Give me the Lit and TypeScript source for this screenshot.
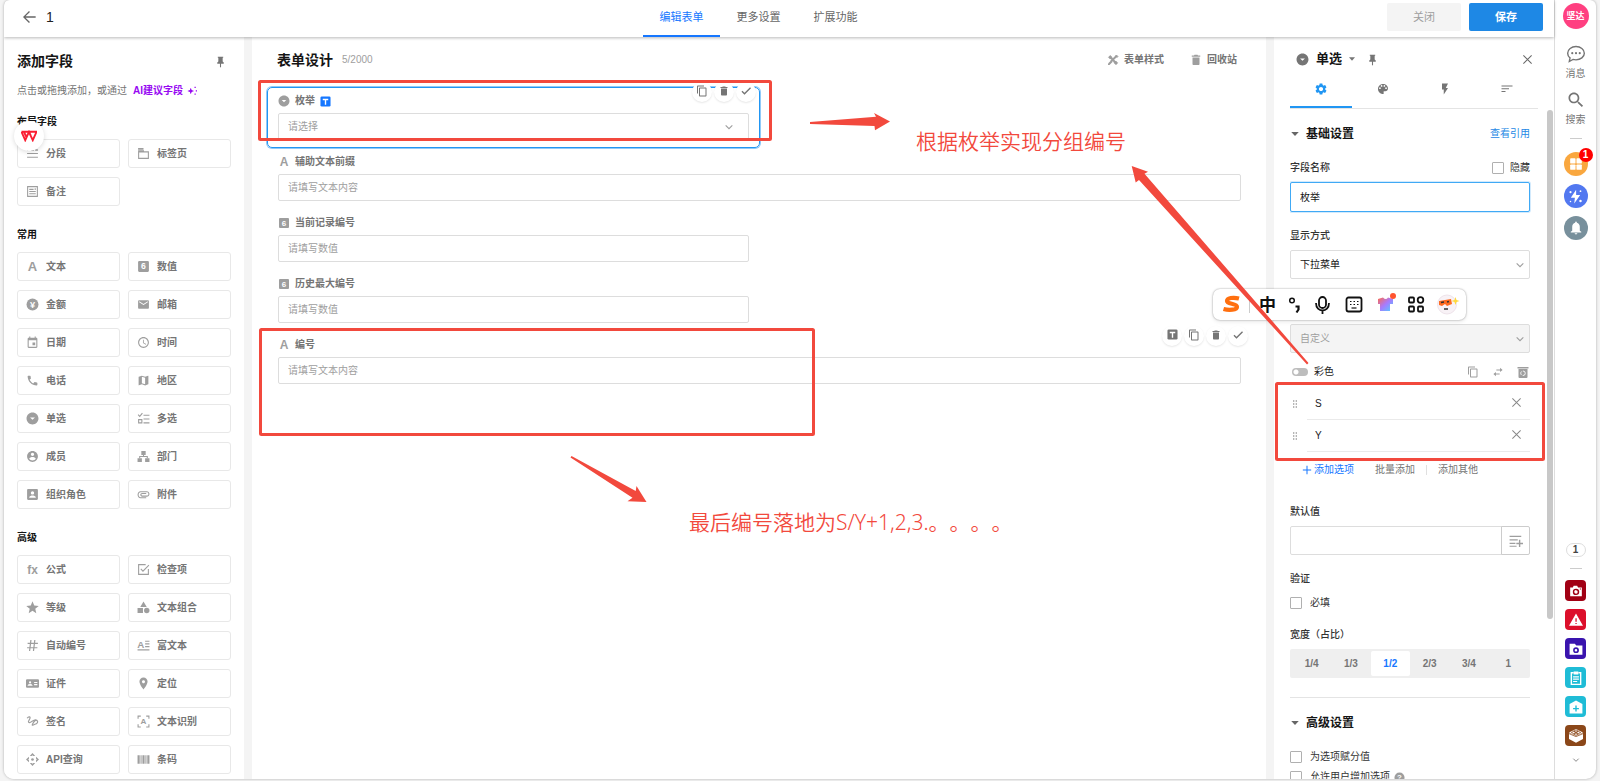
import { LitElement, html, svg, css, nothing, TemplateResult } from "lit";
import { customElement, state } from "lit/decorators.js";
import { classMap } from "lit/directives/class-map.js";

const path = (d: string) => svg`<path d=${d} />`;

const DROP_CIRCLE = path("M12 1C5.900 1 1 5.900 1 12s4.900 11 11 11 11-4.900 11-11S18.100 1 12 1zm0 13.500l-4.500-4.500h9l-4.500 4.500z");
const TRASH = path("M6 19c0 1.1.9 2 2 2h8c1.1 0 2-.9 2-2V7H6v12zM19 4h-3.5l-1-1h-5l-1 1H5v2h14V4z");

const GLYPHS: Record<string, unknown> = {
  back: path("M22 11H6.83l6.59-6.59L12 3l-9 9 9 9 1.41-1.41L6.83 13H22v-2z"),
  pin: path("M16 5h.99L17 3H7v2h1v7l-2 2v2h5v6l1 1 1-1v-6h5v-2l-2-2V5z"),
  sparkle: path("M9 4l2.2 5.8L17 12l-5.800 2.200L9 20l-2.200-5.800L1 12l5.800-2.200zM18 2h3v3h-3zM21 10h3v3h-3zM18 18h3v3h-3z"),
  divider: path("M2 4h5v3H2zM9.500 4h5v3h-5zM17 4h5v3h-5zM2 11h20v2H2zM2 18h20v2H2z"),
  tabpage: svg`<path d="M2 2h10v3H2z"/><path d="M3 9h18v12H3zM3 9V7h9v2" fill="none" stroke="currentColor" stroke-width="2"/>`,
  note: svg`<path d="M3 3h18v18H3z" fill="none" stroke="currentColor" stroke-width="2"/><path d="M6 7h8v2H6zM6 11h12v2H6zM6 15h12v2H6zM16 6h2v3h-2z"/>`,
  text: svg`<text x="12" y="20" text-anchor="middle" font-size="24" font-weight="700">A</text>`,
  number: svg`<rect x="2" y="2" width="20" height="20" rx="2"/><text x="12" y="17.500" text-anchor="middle" font-size="16" font-weight="700" fill="#fff">6</text>`,
  money: svg`<circle cx="12" cy="12" r="11"/><text x="12" y="18" text-anchor="middle" font-size="17" font-weight="700" fill="#fff">¥</text>`,
  mail: path("M20 4H4c-1.100 0-1.990.9-1.990 2L2 18c0 1.100.9 2 2 2h16c1.100 0 2-.9 2-2V6c0-1.100-.9-2-2-2zm0 4l-8 5-8-5V6l8 5 8-5v2z"),
  date: path("M17 12h-5v5h5v-5zM16 1v2H8V1H6v2H5c-1.110 0-1.990.9-1.990 2L3 20c0 1.100.89 2 2 2h14c1.100 0 2-.9 2-2V5c0-1.100-.9-2-2-2h-1V1h-2zm3 19H5V8h14v12z"),
  time: path("M11.990 2C6.470 2 2 6.480 2 12s4.470 10 9.990 10C17.520 22 22 17.520 22 12S17.520 2 11.990 2zM12 20c-4.420 0-8-3.580-8-8s3.580-8 8-8 8 3.580 8 8-3.580 8-8 8zm.5-13H11v6l5.250 3.150.75-1.230-4.500-2.670z"),
  phone: path("M6.620 10.790c1.440 2.830 3.760 5.140 6.590 6.590l2.200-2.200c.27-.27.67-.36 1.020-.24 1.120.37 2.330.57 3.570.57.55 0 1 .45 1 1V20c0 .55-.45 1-1 1-9.390 0-17-7.610-17-17 0-.55.45-1 1-1h3.500c.55 0 1 .45 1 1 0 1.250.2 2.450.57 3.570.11.35.03.74-.25 1.020l-2.200 2.200z"),
  region: path("M20.500 3l-.16.03L15 5.100 9 3 3.360 4.900c-.21.07-.36.25-.36.48V20.500c0 .28.22.5.5.5l.16-.03L9 18.900l6 2.100 5.640-1.900c.21-.07.36-.25.36-.48V3.500c0-.28-.22-.5-.5-.5zM15 19l-6-2.110V5l6 2.110V19z"),
  single: DROP_CIRCLE,
  multi: svg`<path d="M2 5l3 3 5-6" fill="none" stroke="currentColor" stroke-width="2"/><path d="M3 14h6v6H3z" fill="none" stroke="currentColor" stroke-width="2"/><path d="M12 5h11v2H12zM12 12h11v2H12zM12 19h11v2H12z"/>`,
  member: path("M12 2C6.480 2 2 6.480 2 12s4.480 10 10 10 10-4.480 10-10S17.520 2 12 2zm0 3c1.660 0 3 1.340 3 3s-1.340 3-3 3-3-1.340-3-3 1.340-3 3-3zm0 14.200c-2.500 0-4.710-1.280-6-3.220.03-1.990 4-3.080 6-3.080 1.990 0 5.970 1.090 6 3.080-1.290 1.940-3.500 3.220-6 3.220z"),
  dept: svg`<path d="M8 2h8v7H8zM1 15h8v7H1zM15 15h8v7h-8z"/><path d="M12 9v3M5 15v-3h14v3" fill="none" stroke="currentColor" stroke-width="2"/>`,
  role: path("M2 4v16c0 1.100.89 2 2 2h16c1.100 0 2-.9 2-2V4c0-1.100-.9-2-2-2H4c-1.110 0-2 .9-2 2zm13 5c0 1.660-1.340 3-3 3s-3-1.340-3-3 1.340-3 3-3 3 1.340 3 3zm-9 8c0-2 4-3.100 6-3.100s6 1.100 6 3.100v1H6v-1z"),
  attach: path("M6.500 19C3.460 19 1 16 1 12.500S3.460 6 6.500 6H18c2.800 0 5 2.200 5 5s-2.200 5-5 5H9.500C7.600 16 6 14.400 6 12.500S7.600 9 9.500 9H17v2H9.500c-.8 0-1.500.7-1.500 1.500s.7 1.500 1.500 1.500H18c1.700 0 3-1.300 3-3s-1.300-3-3-3H6.500C4.500 8 3 10 3 12.500S4.500 17 6.500 17H17v2z"),
  formula: svg`<text x="12" y="20" text-anchor="middle" font-size="22" font-weight="700">fx</text>`,
  check_item: svg`<path d="M21 11v10H3V3h13" fill="none" stroke="currentColor" stroke-width="2"/><path d="M7 11l4 4L22 4" fill="none" stroke="currentColor" stroke-width="2"/>`,
  star: path("M12 18.200L19 22.500l-1.900-8L23.500 9l-8.300-.7L12 .5 8.800 8.300.5 9l6.400 5.500-1.900 8z"),
  combo: svg`<path d="M12 1l6 10H6zM1 13h10v9H1z"/><circle cx="18" cy="17.500" r="5"/>`,
  hash: path("M8 2h2.200L9.600 7h5L15.200 2h2.200L16.800 7H22v2h-5.500l-.7 6H21v2h-5.500l-.6 5h-2.200l.6-5h-5l-.6 5H5.500l.6-5H2v-2h4.300L7 9H3V7h4.300zM9.300 9l-.7 6h5l.7-6z"),
  rich: svg`<text x="7" y="16" text-anchor="middle" font-size="18" font-weight="700">A</text><path d="M15 3h8v2h-8zM15 8h8v2h-8zM15 13h8v2h-8zM1 19h22v2H1z"/>`,
  card: svg`<path fill-rule="evenodd" d="M2 4h20q2 0 2 2v12q0 2-2 2H2q-2 0-2-2V6q0-2 2-2zM15 9v2h6V9zM15 13v2h6v-2zM3 16h9v-1q-1-2-4.500-2T3 15zM7.500 8a2 2 0 1 0 .1 4 2 2 0 0 0-.1-4z"/>`,
  place: path("M12 1C7.700 1 4.500 4.300 4.500 8.500 4.500 14.500 12 23 12 23s7.500-8.500 7.500-14.500C19.500 4.300 16.300 1 12 1zm0 10.500c-1.600 0-2.800-1.200-2.800-2.800S10.400 6 12 6s2.800 1.200 2.800 2.700-1.200 2.800-2.800 2.800z"),
  sign: svg`<path d="M2 6c3-4 7-3 5 1s-4 6-1 7 8-6 12-5 5 5 1 7-9 5-7 1 4-8 7-7" fill="none" stroke="currentColor" stroke-width="2.200"/>`,
  ocr: svg`<path d="M2 7V2h5M17 2h5v5M22 17v5h-5M7 22H2v-5" fill="none" stroke="currentColor" stroke-width="2"/><text x="12" y="17.500" text-anchor="middle" font-size="15" font-weight="700">A</text>`,
  api: svg`<path d="M12 0l5 5.500h-3.500L12 4l-1.500 1.500H7zM12 24l5-5.500h-3.500L12 20l-1.500-1.500H7zM0 12l5.500-5v3.500L4 12l1.500 1.500V17zM24 12l-5.500-5v3.500L20 12l-1.500 1.500V17z"/><circle cx="12" cy="12" r="2.500"/>`,
  barcode: path("M1 4h4v16H1zM6.500 4h2v16h-2zM10 4h4v16h-4zM15.500 4h2v16h-2zM19 4h4v16h-4z"),
  tools: svg`<path d="M5 5l15 15M19 4L8 15" fill="none" stroke="currentColor" stroke-width="4"/><path d="M8 13l3 3-6 6H2v-3z"/><path d="M3 6.500L6.500 3 10 6.500 6.500 10zM14 17.500l3.500-3.500 3.500 3.500-3.500 3.500zM19 2l3 3-2 2-3-3z" stroke="currentColor" stroke-width="1.500"/>`,
  trash: TRASH,
  bin: path("M5 20c0 1.200.9 2 2 2h10c1.100 0 2-.8 2-2V7H5v13zM20.500 3H16l-1-1.500H9L8 3H3.500v2.500h17V3z"),
  copy: path("M16 1H4c-1.100 0-2 .9-2 2v14h2V3h12V1zm3 4H8c-1.100 0-2 .9-2 2v14c0 1.100.9 2 2 2h11c1.100 0 2-.9 2-2V7c0-1.100-.9-2-2-2zm0 16H8V7h11v14z"),
  done: path("M9 15.700L4.830 11.500 3 13.400 9 19.400 22 6.400 20.100 4.600z"),
  tbox: svg`<rect x="1" y="1" width="22" height="22" rx="3"/><path d="M6 6h12v3h-4.500v10h-3V9H6z" fill="#fff"/>`,
  caret: path("M3 7h18l-9 10z"),
  close: svg`<path d="M3 3l18 18M21 3L3 21" fill="none" stroke="currentColor" stroke-width="2.200"/>`,
  gear: path("M19.140 12.940c.04-.3.06-.61.06-.94 0-.32-.02-.64-.07-.94l2.030-1.580c.18-.14.23-.41.12-.61l-1.920-3.320c-.12-.22-.37-.29-.59-.22l-2.390.96c-.5-.38-1.030-.7-1.620-.94l-.36-2.540c-.04-.24-.24-.41-.48-.41h-3.840c-.24 0-.43.17-.47.41l-.36 2.540c-.59.24-1.130.57-1.620.94l-2.390-.96c-.22-.08-.47 0-.59.22L2.740 8.870c-.12.21-.08.47.12.61l2.030 1.580c-.05.3-.09.63-.09.94s.02.64.07.94l-2.030 1.580c-.18.14-.23.41-.12.61l1.920 3.320c.12.22.37.29.59.22l2.390-.96c.5.38 1.030.7 1.620.94l.36 2.540c.05.24.24.41.48.41h3.840c.24 0 .44-.17.47-.41l.36-2.540c.59-.24 1.130-.56 1.620-.94l2.390.96c.22.08.47 0 .59-.22l1.920-3.320c.12-.22.07-.47-.12-.61l-2.010-1.580zM12 15.600c-1.980 0-3.600-1.620-3.600-3.600s1.620-3.600 3.600-3.600 3.600 1.620 3.600 3.600-1.620 3.600-3.600 3.600z"),
  palette: path("M12 2c-5.500 0-10 4.500-10 10s4.500 10 10 10c.9 0 1.700-.7 1.700-1.700 0-.4-.2-.8-.4-1.100-.3-.3-.4-.7-.4-1.100 0-.9.7-1.700 1.700-1.700h2c3.100 0 5.400-2.500 5.400-5.500C22 6 17.500 2 12 2zM5.900 12a1.700 1.700 0 1 1 0-3.400 1.700 1.700 0 0 1 0 3.400zm3.300-4.400a1.700 1.700 0 1 1 0-3.400 1.700 1.700 0 0 1 0 3.400zm5.600 0a1.700 1.700 0 1 1 0-3.400 1.700 1.700 0 0 1 0 3.400zm3.300 4.400a1.700 1.700 0 1 1 0-3.400 1.700 1.700 0 0 1 0 3.400z"),
  flash: path("M6 1v12h3.500v10L18 10h-4.500L18 1z"),
  sort: path("M1 18h8v-2H1v2zM1 5v2h22V5H1zm0 7.500h15v-2H1v2z"),
  swap: path("M17 2l6 5-6 5V8.200H8V5.800h9zM7 12l-6 5 6 5v-3.800h9v-2.400H7z"),
  recycle: svg`<path d="M3 6h18v16q0 2-2 2H5q-2 0-2-2zM1 2h22v3H1z"/><circle cx="12" cy="14.500" r="4.500" fill="none" stroke="#fff" stroke-width="1.800" stroke-dasharray="7 2.400"/>`,
  grip: path("M6 1h4v4H6zM14 1h4v4h-4zM6 10h4v4H6zM14 10h4v4h-4zM6 19h4v4H6zM14 19h4v4h-4z"),
  plus: path("M10.800 2h2.400v8.800H22v2.400h-8.800V22h-2.400v-8.800H2v-2.400h8.800z"),
  list_plus: path("M1 3h20v2H1zM1 9h14v2H1zM1 15h10v2H1zM1 20h12v2H1zM17 10h2.400v5H24v2.400h-4.600v5H17v-5h-4.500V15H17z"),
  chevron: svg`<path d="M4 8l8 8 8-8" fill="none" stroke="currentColor" stroke-width="2.600"/>`,
  help: svg`<circle cx="12" cy="12" r="11"/><text x="12" y="18" text-anchor="middle" font-size="17" font-weight="700" fill="#fff">?</text>`,
  message: svg`<path d="M12 3c5.500 0 10 3.600 10 8s-4.500 8-10 8c-1.300 0-2.500-.2-3.600-.5L4 21l.8-4.300C3 15.200 2 13.200 2 11c0-4.400 4.500-8 10-8z" fill="none" stroke="currentColor" stroke-width="1.700"/><circle cx="7.500" cy="11" r="1.300"/><circle cx="12" cy="11" r="1.300"/><circle cx="16.500" cy="11" r="1.300"/>`,
  search: path("M15.500 14h-.79l-.28-.27C15.410 12.590 16 11.110 16 9.500 16 5.910 13.090 3 9.500 3S3 5.910 3 9.500 5.910 16 9.500 16c1.610 0 3.090-.59 4.230-1.570l.27.28v.79l5 4.990L20.490 19l-4.990-5zm-6 0C7.010 14 5 11.990 5 9.500S7.010 5 9.500 5 14 7.010 14 9.500 11.990 14 9.500 14z"),
  apps: svg`<rect x="2" y="2" width="9.200" height="9.200" rx="1.500"/><rect x="12.800" y="2" width="9.200" height="9.200" rx="1.500"/><rect x="2" y="12.800" width="9.200" height="9.200" rx="1.500"/><rect x="12.800" y="12.800" width="9.200" height="9.200" rx="1.500"/>`,
  bolt: svg`<path d="M13 1L4.500 14H11l-1 9 9.500-13.500H13z"/><circle cx="4" cy="5" r="1.700"/><circle cx="20" cy="3.500" r="1.400"/><circle cx="4" cy="20" r="1.200"/><circle cx="20" cy="19" r="2"/>`,
  bell: path("M12 23c1.300 0 2.300-.9 2.300-2H9.700c0 1.100 1 2 2.300 2zm6.500-6.500V10c0-3.600-2-6.200-5-7V2.500C13.500 1.700 12.800 1 12 1s-1.500.7-1.500 1.500V3c-3 .8-5 3.400-5 7v6.500L3 18.500v1h18v-1z"),
  camera: svg`<path fill-rule="evenodd" d="M8 3h6l1.500 3H22v15H2V6h4.500zM12 8a5.500 5.500 0 1 0 .1 11A5.500 5.500 0 0 0 12 8zm0 2.500a3 3 0 1 1-.1 6 3 3 0 0 1 .1-6zM18.500 7.500v2h2v-2z"/>`,
  warning: svg`<path fill-rule="evenodd" d="M0 22h24L12 1zM11 9h2.200v6H11zm0 8h2.200v2H11z"/>`,
  folder: svg`<path fill-rule="evenodd" d="M1 3h9l2.500 3H23v16H1zM12 9a5 5 0 1 0 .1 10A5 5 0 0 0 12 9zm0 2.800a2.200 2.200 0 1 1-.1 4.400 2.200 2.200 0 0 1 .1-4.400z"/>`,
  clipboard: svg`<path d="M8 3H4v20h16V3h-4" fill="none" stroke="currentColor" stroke-width="2.400"/><path d="M8 1h8v5H8zM7 9h10v2H7zM7 13h10v2H7zM7 17h7v2H7z"/>`,
  house: svg`<path fill-rule="evenodd" d="M12 1l11 6v16H1V7zM10.800 9.500v4H7v2.400h3.800v4h2.400v-4H17v-2.400h-3.800v-4z"/>`,
  box: svg`<path d="M12 11.500L24 7v10l-12 6.500L0 17V7z"/><path d="M12 0l12 6-12 6L0 6z"/><path d="M4 6l4-2 4 2-4 2zM12 6l4-2 4 2-4 2zM8 3.600l4-2 4 2-4 2zM8 8.800l4-2 4 2-4 2zM0 8l12 5 12-5" fill="none" stroke="#8b4719" stroke-width="1.300"/>`,
};

const icon = (name: string, size: number, extra = "") =>
  html`<svg class="ico ${extra}" width=${size} height=${size} viewBox="0 0 24 24" fill="currentColor" aria-hidden="true">${GLYPHS[name]}</svg>`;

const GROUPS: { title: string; items: [string, string][] }[] = [
  { title: "布局字段", items: [["divider", "分段"], ["tabpage", "标签页"], ["note", "备注"]] },
  {
    title: "常用",
    items: [
      ["text", "文本"], ["number", "数值"], ["money", "金额"], ["mail", "邮箱"], ["date", "日期"],
      ["time", "时间"], ["phone", "电话"], ["region", "地区"], ["single", "单选"], ["multi", "多选"],
      ["member", "成员"], ["dept", "部门"], ["role", "组织角色"], ["attach", "附件"],
    ],
  },
  {
    title: "高级",
    items: [
      ["formula", "公式"], ["check_item", "检查项"], ["star", "等级"], ["combo", "文本组合"],
      ["hash", "自动编号"], ["rich", "富文本"], ["card", "证件"], ["place", "定位"],
      ["sign", "签名"], ["ocr", "文本识别"], ["api", "API查询"], ["barcode", "条码"],
    ],
  },
];

interface Field {
  id: string;
  icon: string;
  label: string;
  hint: string;
  full?: boolean;
  dropdown?: boolean;
  title?: boolean;
  actions?: string[];
}

const FIELDS: Field[] = [
  { id: "enum", icon: "single", label: "枚举", hint: "请选择", dropdown: true, title: true, actions: ["copy", "trash", "done"] },
  { id: "prefix", icon: "text", label: "辅助文本前缀", hint: "请填写文本内容", full: true },
  { id: "current", icon: "number", label: "当前记录编号", hint: "请填写数值" },
  { id: "max", icon: "number", label: "历史最大编号", hint: "请填写数值" },
  { id: "code", icon: "text", label: "编号", hint: "请填写文本内容", full: true, actions: ["tbox", "copy", "trash", "done"] },
];

const ACTION_NAMES: Record<string, string> = { copy: "复制", trash: "删除", done: "完成", tbox: "设为标题" };

const APPS: [string, string][] = [
  ["camera", "c1"], ["warning", "c2"], ["folder", "c3"], ["clipboard", "c4"], ["house", "c4"], ["box", "c5"],
];

@customElement("app-root")
export class AppRoot extends LitElement {
  @state() private selected = "enum";
  @state() private ratio = "1/2";

  static styles = css`
    :host {
      display: block;
      position: relative;
      height: 100vh;
      overflow: hidden;
      background: #f4f4f4;
      color: #151515;
      font: 10px/16px "Liberation Sans", "Noto Sans CJK SC", sans-serif;
    }
    *, *::before { box-sizing: border-box; }
    button, input, select { font: inherit; color: inherit; margin: 0; }
    button { border: 0; padding: 0; background: none; cursor: pointer; }
    a { color: #1e88e5; text-decoration: none; }
    h1, h2, h3 { margin: 0; }
    .ico { display: block; flex: none; }
    .shell {
      display: flex;
      height: calc(100vh - 2px);
      margin: 0 4px 2px;
      overflow: hidden;
      border-radius: 6px 6px 10px 10px;
      box-shadow: 0 0 3px rgba(0, 0, 0, 0.3);
      background: #fff;
    }
    .main { flex: 1; min-width: 0; display: flex; flex-direction: column; }

    .top {
      position: relative;
      z-index: 1;
      display: grid;
      grid-template-columns: 1fr auto 1fr;
      height: 37px;
      flex: none;
      background: #fff;
      box-shadow: 0 1px 3px rgba(0, 0, 0, 0.28);
    }
    .crumb { display: flex; align-items: center; gap: 9px; padding: 0 0 4px 17px; color: #666; }
    .crumb b { font-size: 14px; font-weight: 400; color: #222; }
    .tabs { display: flex; margin-right: 41px; }
    .tabs button { width: 77px; padding-bottom: 1px; font-size: 11px; color: #666; border-bottom: 2px solid transparent; }
    .tabs .on { color: #1677ff; border-color: #1677ff; }
    .cmds { display: flex; justify-content: flex-end; gap: 8px; padding: 3px 11px 6px 0; }
    .cmds button { width: 74px; border-radius: 2px; background: #f4f4f4; color: #9e9e9e; font-size: 11px; }
    .cmds .save { background: #1e88e5; color: #fff; font-weight: 700; }

    .body { flex: 1; min-height: 0; display: flex; gap: 8px; background: #f4f4f4; }
    .body > * { background: #fff; overflow: hidden; }

    .palette { width: 240px; flex: none; padding: 14px 13px 0; }
    .bar { display: flex; align-items: center; height: 20px; }
    .bar h1, .bar h2 { font-size: 14px; line-height: 20px; font-weight: 700; }
    .palette .bar { justify-content: space-between; padding-right: 4px; color: #757575; }
    .palette .bar h1 { color: #151515; }
    .hint { display: flex; align-items: center; margin: 12px 0 15px; color: #757575; }
    .hint a { display: flex; align-items: center; gap: 4px; margin-left: 6px; color: #9709f2; font-weight: 700; }
    .palette h3 { font-size: 10px; line-height: 16px; }
    .grid { display: grid; grid-template-columns: 1fr 1fr; gap: 9px 8px; margin: 9px 0 21px; }
    .grid button {
      display: flex;
      align-items: center;
      gap: 7px;
      height: 29px;
      padding-left: 8px;
      border: 1px solid #e8e8e8;
      border-radius: 3px;
      color: #9e9e9e;
    }
    .grid span { color: #757575; font-weight: 700; }

    .canvas { flex: 1; min-width: 0; padding: 13px 14px 0 15px; }
    .canvas > .bar { padding: 0 15px 0 10px; }
    .count { flex: 1; margin-left: 9px; color: #9e9e9e; }
    .tool { display: flex; align-items: center; gap: 5px; margin-left: 26px; font-weight: 700; color: #757575; }
    .tool .ico { color: #9e9e9e; }
    .form { display: grid; grid-template-columns: 1fr 1fr; margin-top: 17px; }
    .field { position: relative; grid-column: 1; padding: 5px 10px 7px; border: 1px solid transparent; border-radius: 5px; }
    .field.full { grid-column: 1 / -1; }
    .field.on { border-color: #2196f3; box-shadow: 0 0 0 1px rgba(33, 150, 243, 0.5); }
    .field > label { display: flex; align-items: center; gap: 5px; margin-bottom: 4px; color: #757575; font-weight: 700; }
    .field > label .ico { color: #9e9e9e; }
    .field > label .tag { color: #1677ff; }
    .box {
      display: block;
      width: 100%;
      height: 29px;
      padding: 0 9px;
      border: 1px solid #ddd;
      border-radius: 2px;
      background: #fff;
      outline: 0;
      appearance: none;
    }
    .field .box { height: 27px; color: #9e9e9e; }
    .box::placeholder { color: #9e9e9e; }
    .pick { position: relative; }
    .pick .ico { position: absolute; right: 5px; top: 10px; color: #9e9e9e; }
    .field .pick .ico { right: 15px; top: 9px; }
    .actions { position: absolute; z-index: 1; right: 3px; top: -6px; display: flex; gap: 2px; }
    .actions button {
      display: grid;
      place-items: center;
      width: 20px;
      height: 20px;
      padding-bottom: 3px;
      border-radius: 50%;
      background: #fff;
      color: #757575;
      box-shadow: 0 1px 2px rgba(0, 0, 0, 0.1);
    }

    .props { position: relative; display: flex; flex-direction: column; width: 280px; flex: none; padding: 12px 0 0 16px; }
    .props > .bar { gap: 6px; padding: 0 21px 0 6px; color: #757575; flex: none; }
    .props > .bar h2 { margin-left: 1px; font-size: 13px; color: #151515; }
    .props > .bar .fix { margin-left: 4px; }
    .props > .bar .end { margin-left: auto; color: #666; }
    .ptabs { display: grid; grid-template-columns: repeat(4, 1fr); flex: none; height: 38px; margin: 2px 16px 0 0; border-bottom: 1px solid #e4e4e4; color: #757575; }
    .ptabs button { display: grid; place-items: center; padding-top: 1px; border-bottom: 2px solid transparent; }
    .ptabs .on { color: #2196f3; border-color: #2196f3; }
    .scroll { flex: 1; min-height: 0; overflow: hidden; padding: 15px 24px 0 0; }
    .thumb { position: absolute; right: 1px; top: 73px; width: 6px; height: 509px; border-radius: 3px; background: #c8c8c8; }
    .sec { display: flex; align-items: center; gap: 6px; height: 20px; margin-bottom: 16px; color: #666; }
    .sec h3 { flex: 1; font-size: 12px; line-height: 20px; color: #151515; }
    .lab { display: flex; justify-content: space-between; margin-bottom: 6px; color: #333; font-weight: 500; }
    .box.active { height: 30px; padding-bottom: 1px; border-color: #40a9f5; box-shadow: 0 0 0 1px #d3eafc; }
    .gap16 { margin-bottom: 16px; }
    .gap45 { margin-bottom: 45px; }
    .gap11 { margin-bottom: 11px; }
    .box.off { background: #f4f4f4; color: #9e9e9e; opacity: 1; }
    .chk { display: flex; align-items: center; gap: 8px; color: #333; font-weight: 400; }
    .lab .chk { gap: 6px; }
    .lab.wide { margin-bottom: 8px; }
    input[type="checkbox"] { appearance: none; width: 12px; height: 12px; border: 1px solid #b0b0b0; border-radius: 1px; background: #fff; }
    .color { display: flex; align-items: center; gap: 14px; padding: 0 1px 0 2px; color: #9e9e9e; }
    .color label { flex: 1; display: flex; align-items: center; gap: 6px; color: #222; }
    .color .switch { width: 16px; height: 8px; border: 0; border-radius: 4px; background: radial-gradient(circle at 4px 4px, #fff 2px, #bdbdbd 3px); }
    .opts { margin: 8px 0 10px; padding: 0; list-style: none; }
    .opts li { display: flex; align-items: center; gap: 8px; height: 32px; padding-left: 1px; color: #9e9e9e; }
    .opts .cell { flex: 1; display: flex; align-items: center; height: 32px; padding: 0 8px; border-bottom: 1px solid #eaeaea; }
    .opts input { flex: 1; min-width: 0; padding: 0; border: 0; outline: 0; background: none; color: #222; }
    .opts button { color: #888; padding-bottom: 3px; }
    .adds { display: flex; align-items: center; padding-left: 12px; margin-bottom: 26px; color: #757575; }
    .adds button { display: flex; align-items: center; gap: 2px; height: 16px; }
    .adds .new { margin-right: 21px; color: #1677ff; }
    .adds .sep { width: 1px; height: 10px; margin: 0 11px; background: #e0e0e0; }
    .joined { display: flex; margin-bottom: 16px; }
    .joined .box { flex: 1; min-width: 0; border-radius: 2px 0 0 2px; }
    .joined button { display: grid; place-items: center; width: 29px; margin-left: -1px; border: 1px solid #ccc; border-radius: 0 2px 2px 0; color: #9e9e9e; }
    .seg { display: grid; grid-template-columns: repeat(6, 1fr); height: 29px; padding: 2px; border-radius: 2px; background: #efefef; }
    .seg button { border-radius: 2px; color: #757575; font-weight: 700; }
    .seg .on { background: #fff; color: #1677ff; }
    .rule { height: 1px; margin: 19px 0 15px; background: #e4e4e4; }
    .tight { margin-bottom: 4px; }
    .tight + .chk .ico { margin-left: -4px; color: #9e9e9e; }

    .rail { display: flex; flex-direction: column; align-items: center; width: 42px; flex: none; padding: 3px 0 13px; border-left: 1px solid #ddd; color: #757575; }
    .avatar { width: 26px; height: 26px; border-radius: 50%; background: #ff4081; color: #fff; font-size: 9px; font-weight: 700; margin-bottom: 15px; }
    .nav { display: flex; flex-direction: column; align-items: center; gap: 3px; line-height: 14px; margin-bottom: 9px; }
    .line { width: 12px; height: 1px; flex: none; background: #ccc; }
    .round { position: relative; display: grid; place-items: center; width: 24px; height: 24px; margin-bottom: 8px; border-radius: 50%; color: #fff; }
    .upper { margin: 2px 0 13px; }
    .orange { background: #f9a73f; }
    .blue { background: #5278f0; }
    .slate { background: #78909c; }
    .badge { position: absolute; top: -4px; right: -5px; width: 14px; height: 14px; border-radius: 7px; background: #f00; color: #fff; font-weight: 700; line-height: 14px; text-align: center; }
    .pill { width: 20px; height: 14px; margin: auto 0 11px; border: 1px solid #ddd; border-radius: 7px; color: #444; font-weight: 700; line-height: 12px; text-align: center; }
    .apps { display: grid; gap: 8px; margin: 11px 0 8px; }
    .apps button { display: grid; place-items: center; width: 21px; height: 21px; border-radius: 4px; color: #fff; }
    .more { display: grid; place-items: center; height: 12px; }
    .c1 { background: #a10014; }
    .c2 { background: #dc0f2b; }
    .c3 { background: #3a14ae; }
    .c4 { background: #1fbcd6; }
    .c5 { background: #8b4719; }

    .over { position: absolute; inset: 0; z-index: 3; pointer-events: none; }
    .over > * { position: absolute; }
    .marks { left: 0; top: 0; width: 1600px; height: 781px; }
    .say { font: 350 21px/28px "Noto Sans", "Noto Sans CJK SC", sans-serif; color: #f2493d; white-space: nowrap; text-spacing-trim: space-all; }
    .say1 { left: 916px; top: 127px; }
    .say2 { left: 689px; top: 508px; }
    .wps { left: 14px; top: 121px; display: grid; place-items: center; width: 30px; height: 30px; border-radius: 50%; background: #fff; box-shadow: 0 1px 5px rgba(0, 0, 0, 0.15); }
    .ime { left: 1213px; top: 289px; display: flex; align-items: center; width: 253px; height: 31px; border-radius: 7px; background: #fff; box-shadow: 0 0 2px rgba(0, 0, 0, 0.4), 0 2px 4px rgba(0, 0, 0, 0.08); }
    .ime svg { display: block; }
  `;

  private check(label: string, id: string, extra = "", tail: TemplateResult | typeof nothing = nothing) {
    return html`<label class="chk ${extra}" for=${id}><input type="checkbox" id=${id} />${label}${tail}</label>`;
  }

  private renderField(f: Field) {
    return html`
      <div class=${classMap({ field: true, full: !!f.full, on: this.selected === f.id })} @click=${() => (this.selected = f.id)}>
        <label for=${f.id}>${icon(f.icon, 12)}${f.label}${f.title ? icon("tbox", 11, "tag") : nothing}</label>
        ${f.dropdown
          ? html`<div class="pick"><select class="box" id=${f.id}><option>${f.hint}</option></select>${icon("chevron", 10)}</div>`
          : html`<input class="box" id=${f.id} placeholder=${f.hint} />`}
        ${f.actions
          ? html`<div class="actions">${f.actions.map((a) => html`<button aria-label=${ACTION_NAMES[a]}>${icon(a, a === "tbox" ? 11 : 12)}</button>`)}</div>`
          : nothing}
      </div>`;
  }

  private renderProps() {
    return html`
      <aside class="props">
        <div class="bar">
          ${icon("single", 13)}<h2>单选</h2>${icon("caret", 8)}
          <button class="fix" aria-label="固定">${icon("pin", 13)}</button>
          <button class="end" aria-label="关闭面板">${icon("close", 11)}</button>
        </div>
        <div class="ptabs">
          ${["gear", "palette", "flash", "sort"].map((n, i) => html`<button class=${i ? "" : "on"} aria-label=${n}>${icon(n, i ? 12 : 14)}</button>`)}
        </div>
        <div class="scroll">
          <div class="sec">${icon("caret", 10)}<h3>基础设置</h3><a href="#refs">查看引用</a></div>
          <div class="lab"><label for="fname">字段名称</label>${this.check("隐藏", "hide")}</div>
          <input class="box active gap16" id="fname" value="枚举" />
          <div class="lab"><label for="mode">显示方式</label></div>
          <div class="pick gap45"><select class="box" id="mode"><option>下拉菜单</option></select>${icon("chevron", 10)}</div>
          <div class="pick gap11"><select class="box off" disabled aria-label="选项来源"><option>自定义</option></select>${icon("chevron", 10)}</div>
          <div class="color">
            <label for="tint"><input class="switch" type="checkbox" id="tint" role="switch" />彩色</label>
            <button aria-label="复制选项">${icon("copy", 12)}</button>
            <button aria-label="切换">${icon("swap", 10)}</button>
            <button aria-label="回收">${icon("recycle", 12)}</button>
          </div>
          <ul class="opts">
            ${["S", "Y"].map((o) => html`<li>${icon("grip", 8)}<div class="cell"><input aria-label="选项" value=${o} /><button aria-label="删除选项">${icon("close", 11)}</button></div></li>`)}
          </ul>
          <div class="adds">
            <button class="new">${icon("plus", 10)}添加选项</button><button>批量添加</button><span class="sep"></span><button>添加其他</button>
          </div>
          <div class="lab"><label for="def">默认值</label></div>
          <div class="joined"><input class="box" id="def" /><button aria-label="插入字段">${icon("list_plus", 14)}</button></div>
          <div class="lab wide">验证</div>
          ${this.check("必填", "req", "gap16")}
          <div class="lab">宽度（占比）</div>
          <div class="seg">
            ${["1/4", "1/3", "1/2", "2/3", "3/4", "1"].map((r) => html`<button class=${classMap({ on: r === this.ratio })} @click=${() => (this.ratio = r)}>${r}</button>`)}
          </div>
          <div class="rule"></div>
          <div class="sec">${icon("caret", 10)}<h3>高级设置</h3></div>
          ${this.check("为选项赋分值", "score", "tight")}
          ${this.check("允许用户增加选项", "grow", "", icon("help", 11))}
        </div>
        <div class="thumb"></div>
      </aside>`;
  }

  private renderOverlay() {
    return html`
      <div class="over">
        <div class="wps">
          <svg width="16" height="12" viewBox="0 0 34 24" fill="none" stroke="#fa1e32" stroke-width="4">
            <path d="M1 3h32L25 21 19 8M1 3l8 18 8-18 4 9M6 3l5 10" />
          </svg>
        </div>
        <div class="ime">
          <svg width="253" height="31" viewBox="0 0 253 31" fill="none" stroke="#111" stroke-width="1.800">
            <path d="M26 9.500c-6-1.500-12-.5-12 2.500 0 3.500 10 2 10 6 0 3-8 3.500-13.500 2" stroke="#ff6f0f" stroke-width="4.200" />
            <path d="M36.500 9v15" stroke="#ccc" stroke-width="1" />
            <circle cx="79" cy="11.500" r="2.300" stroke-width="1.500" />
            <path d="M82.500 17.500h3v3l-2 3" stroke-width="2.200" />
            <rect x="106" y="8" width="7" height="11" rx="3.500" />
            <path d="M103 14c0 10 13 10 13 0M109.500 21.500v3.500" />
            <rect x="133.500" y="8.500" width="15" height="14" rx="2" />
            <path d="M137 12.500h9M137 15.500h9" stroke-width="1.200" stroke-dasharray="1.500 2" /><path d="M138.500 19h5" stroke-width="1.200" />
            <defs><linearGradient id="shirt" x1="0" y1="0" x2="1" y2="1"><stop offset="0" stop-color="#ff6a4d" /><stop offset=".5" stop-color="#a77bff" /><stop offset="1" stop-color="#4fd0ff" /></linearGradient></defs>
            <path d="M165 10l5-1.500q3 3 5 0l5 1.500v5h-3v7h-10v-7h-2z" fill="url(#shirt)" stroke="none" />
            <circle cx="180" cy="7" r="3" fill="#ff5430" stroke="none" />
            <rect x="196" y="8.500" width="5" height="5" rx="1" /><circle cx="207.500" cy="11" r="2.800" />
            <rect x="196" y="17.500" width="5" height="5" rx="1" /><rect x="205" y="17.500" width="5" height="5" rx="1" />
            <circle cx="234" cy="15.500" r="9.500" fill="#f8f2f6" stroke="#eee3ea" stroke-width="1" />
            <path d="M226 12l12-2 1 5-5 2-2-2-3 2-3-1z" fill="#ff6a20" stroke="none" />
            <path d="M228 13.500l3-.5M234 13l2-.5M231 20l4 0" stroke="#333" stroke-width="1.500" />
            <path d="M242.500 8l1 3 3 1-3 1-1 3-1-3-3-1 3-1z" fill="#ffd93b" stroke="none" />
            <g fill="#111" stroke="none"><text x="46" y="22" font-size="17" font-weight="700">中</text></g>
          </svg>
        </div>
        <svg class="marks" viewBox="0 0 1600 781" fill="#f2493d">
          <g fill="none" stroke="#f2493d" stroke-width="3">
            <rect x="259.500" y="81.500" width="511" height="58" rx="1" />
            <rect x="260.500" y="329.500" width="553" height="105" rx="1" />
            <rect x="1276.500" y="383.500" width="267" height="76" rx="1" />
          </g>
          <path d="M810 122L876 116.700 874 113 890 121.500 875 130.300 874.500 126 810 124z" />
          <path d="M571.500 456L635.700 491 636.500 486 646.500 502 627.500 501.200 632.500 497.700 570.500 457.500z" />
          <path d="M1308.500 363L1307 364.500 1139 180 1135.700 182.500 1131.700 166 1148 171.700 1144.500 173.700z" />
        </svg>
        <div class="say say1">根据枚举实现分组编号</div>
        <div class="say say2">最后编号落地为S/Y+1,2,3.。。。。</div>
      </div>`;
  }

  render() {
    return html`
      <div class="shell">
        <div class="main">
          <header class="top">
            <div class="crumb"><button aria-label="返回">${icon("back", 16)}</button><b>1</b></div>
            <nav class="tabs"><button class="on">编辑表单</button><button>更多设置</button><button>扩展功能</button></nav>
            <div class="cmds"><button>关闭</button><button class="save">保存</button></div>
          </header>
          <div class="body">
            <aside class="palette">
              <div class="bar"><h1>添加字段</h1><button aria-label="固定">${icon("pin", 13)}</button></div>
              <div class="hint">点击或拖拽添加，或通过<a href="#ai">AI建议字段${icon("sparkle", 10)}</a></div>
              ${GROUPS.map((g) => html`
                <h3>${g.title}</h3>
                <div class="grid">${g.items.map(([n, t]) => html`<button>${icon(n, 13)}<span>${t}</span></button>`)}</div>`)}
            </aside>
            <main class="canvas">
              <div class="bar">
                <h2>表单设计</h2><span class="count">5/2000</span>
                <button class="tool">${icon("tools", 12)}表单样式</button><button class="tool">${icon("bin", 12)}回收站</button>
              </div>
              <div class="form">${FIELDS.map((f) => this.renderField(f))}</div>
            </main>
            ${this.renderProps()}
          </div>
        </div>
        <aside class="rail">
          <button class="avatar">坚达</button>
          <button class="nav">${icon("message", 20)}消息</button>
          <button class="nav">${icon("search", 20)}搜索</button>
          <div class="line upper"></div>
          <button class="round orange" aria-label="应用">${icon("apps", 14)}<span class="badge">1</span></button>
          <button class="round blue" aria-label="智能">${icon("bolt", 15)}</button>
          <button class="round slate" aria-label="通知">${icon("bell", 14)}</button>
          <div class="pill">1</div>
          <div class="line"></div>
          <div class="apps">${APPS.map(([n, c]) => html`<button class=${c} aria-label=${n}>${icon(n, 14)}</button>`)}</div>
          <button class="more" aria-label="更多">${icon("chevron", 8)}</button>
        </aside>
      </div>
      ${this.renderOverlay()}
    `;
  }
}
